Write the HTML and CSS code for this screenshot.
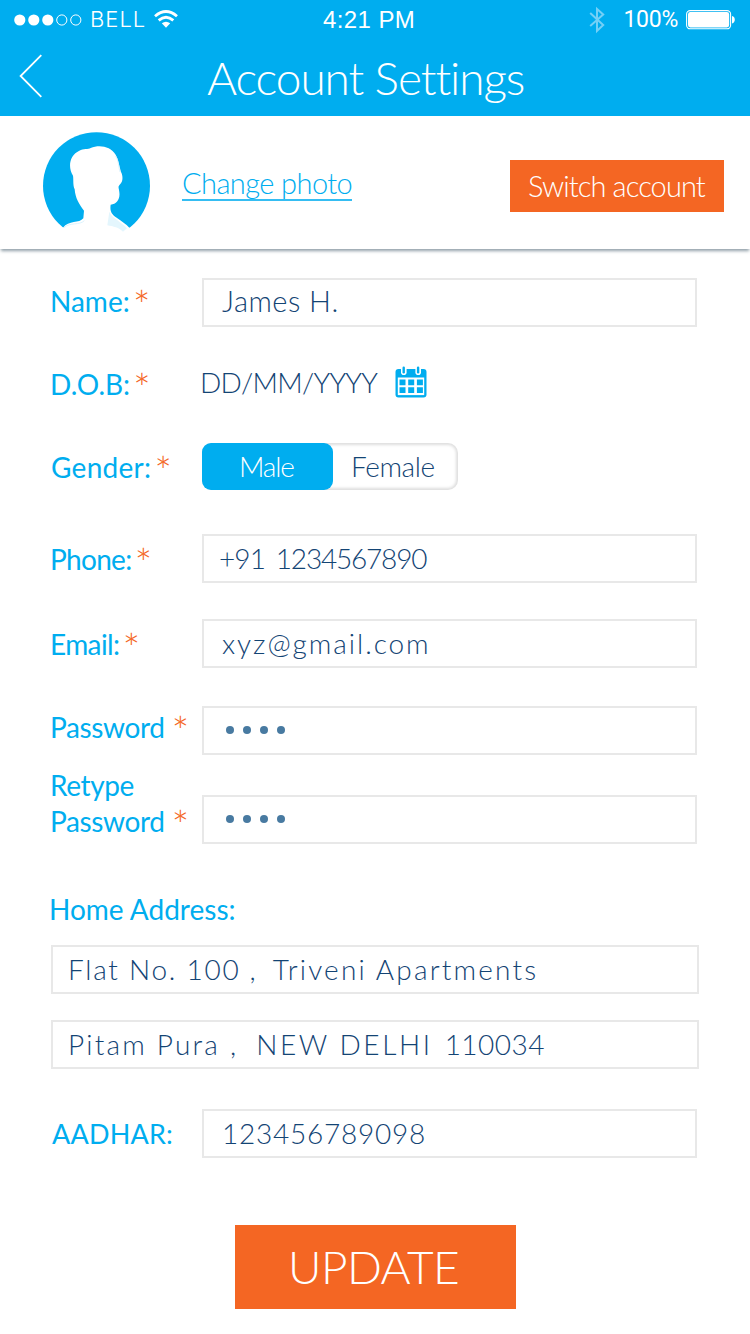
FILE: index.html
```html
<!DOCTYPE html>
<html lang="en">
<head>
<meta charset="utf-8">
<title>Account Settings</title>
<link rel="stylesheet" href="styles.css">
</head>
<body>
<header class="header">
  <div class="status">
    <div class="status-left">
      <svg class="signal" width="68" height="12" viewBox="0 0 68 12"><g fill="#fff"><circle cx="5.8" cy="6" r="5.6"/><circle cx="19.8" cy="6" r="5.6"/><circle cx="33.8" cy="6" r="5.6"/></g><g fill="none" stroke="#fff"><circle cx="47.8" cy="6" r="5.1"/><circle cx="61.8" cy="6" r="5.1"/></g></svg>
      <span class="carrier">BELL</span>
      <svg class="wifi" width="24" height="18" viewBox="0 0 24 18"><g fill="none" stroke="#fff" stroke-width="2.8"><path d="M1 6.2 Q12 -3.2 23 6.2"/><path d="M4.7 10.4 Q12 4 19.3 10.4"/></g><path d="M7.8 13.3 Q12 10 16.2 13.3 L12 17.8 Z" fill="#fff"/></svg>
    </div>
    <span class="clock">4:21 PM</span>
    <div class="status-right">
      <svg class="bluetooth" width="16" height="28" viewBox="0 0 16 28"><path d="M1.2 7 L14.2 19 L8 25 V3 L14.2 8.4 L1.2 20" fill="none" stroke="#74d0f6" stroke-width="2"/></svg>
      <span class="charge">100%</span>
      <svg class="battery" width="50" height="20" viewBox="0 0 50 20"><rect x=".6" y=".6" width="44" height="18.2" rx="3.6" fill="none" stroke="#fff" stroke-width="1.1"/><rect x="2" y="2" width="41.2" height="15.4" rx="2.4" fill="#fff"/><path d="M46 6 Q48.8 6.8 48.8 9.7 Q48.8 12.6 46 13.4 Z" fill="#fff"/></svg>
    </div>
  </div>
  <div class="titlebar">
    <svg class="back" width="24" height="44" viewBox="0 0 24 44"><path d="M22.3 1.2 L1.6 22 L22.3 42.8" fill="none" stroke="#fff" stroke-width="1.8"/></svg>
    <h1 class="title">Account Settings</h1>
  </div>
</header>

<section class="profile">
  <svg class="avatar" width="110" height="105" viewBox="66 44 330 315">
    <circle cx="229.500" cy="208" r="160.500" fill="#00adef"/>
    <path d="M129 334 C146 311 178 322 190 306 L192 283 C177 264 166 245 164 219 C158 205 161 190 159 178 C142 150 150 116 178 103 C190 96 205 100 212 95 C238 84 272 90 287 115 C296 130 298 150 303 167 C309 178 310 196 299 205 C292 212 298 218 298 228 C301 248 290 263 272 265 C269 285 275 294 290 304 C305 314 318 323 328 334 L400 334 V372 H60 V334 Z" fill="#fff"/>
    <path d="M268 286 C276 306 302 314 321 336 L309 346 C297 334 280 330 262 327 Z" fill="#e4f6fd"/>
    <path d="M132 334 C150 317 178 328 193 313 M287 119 C296 132 295 150 300 167" fill="none" stroke="#d5f0fc" stroke-width="2.500"/>
  </svg>
  <a class="change">Change photo</a>
  <button class="switch">Switch account</button>
</section>

<main class="form">
  <div class="row row-name">
    <div class="label">Name:<i class="req">*</i></div>
    <div class="field"><span class="v-name">James H.</span></div>
  </div>
  <div class="row row-dob">
    <div class="label">D.O.B:<i class="req">*</i></div>
    <span class="dob">DD/MM/YYYY</span>
    <svg class="calendar" width="32" height="32" viewBox="0 0 32 32"><rect x=".5" y="3" width="31" height="28.500" rx="3" fill="#00adef"/><rect x="2.800" y="11.500" width="26.400" height="17.600" fill="#fff"/><g fill="#fff"><rect x="6" y="0" width="5.600" height="9" rx="2.800"/><rect x="20.400" y="0" width="5.600" height="9" rx="2.800"/></g><g fill="#00adef"><rect x="7.500" y=".5" width="2.400" height="7" rx="1.200"/><rect x="21.900" y=".5" width="2.400" height="7" rx="1.200"/><path d="M4.500 13.500h6v5.800h-6zM13.200 13.500h6v5.800h-6zM21.900 13.500h6v5.800h-6zM4.500 21.200h6v5.800h-6zM13.200 21.200h6v5.800h-6zM21.900 21.200h6v5.800h-6z"/></g></svg>
  </div>
  <div class="row row-gender">
    <div class="label l-gender">Gender:<i class="req">*</i></div>
    <div class="toggle"><span class="male">Male</span><span class="female">Female</span></div>
  </div>
  <div class="row row-phone">
    <div class="label l-phone">Phone:<i class="req">*</i></div>
    <div class="field"><span class="v-phone">+91 <span class="number">1234567890</span></span></div>
  </div>
  <div class="row row-email">
    <div class="label l-email">Email:<i class="req">*</i></div>
    <div class="field"><span class="v-email">xyz@gmail.com</span></div>
  </div>
  <div class="row row-password">
    <div class="label l-password">Password<i class="req">*</i></div>
    <div class="field dots"><b></b><b></b><b></b><b></b></div>
  </div>
  <div class="row row-retype">
    <div class="label l-password">Retype<br>Password<i class="req">*</i></div>
    <div class="field dots"><b></b><b></b><b></b><b></b></div>
  </div>
  <h2 class="label heading">Home Address:</h2>
  <div class="field wide line1"><span class="flat">Flat No. 100</span><span class="comma1">,</span><span class="triveni">Triveni Apartments</span></div>
  <div class="field wide line2"><span class="pitam">Pitam Pura</span><span class="comma2">,</span><span class="delhi">NEW DELHI</span><span class="pin">110034</span></div>
  <div class="row row-aadhar">
    <div class="label l-aadhar">AADHAR:</div>
    <div class="field"><span class="v-aadhar">123456789098</span></div>
  </div>
  <button class="update">UPDATE</button>
</main>
</body>
</html>
```

FILE: styles.css
```css
* { box-sizing: border-box; }
body { margin: 0; width: 750px; height: 1334px; background: #fff; color: #134474; font: 300 28px/36px Lato, sans-serif; overflow: hidden; }
svg { display: block; flex: none; }
span, a { white-space: nowrap; }
button { border: 0; margin: 0; background: #f46623; color: #fff; font-family: Lato, sans-serif; font-weight: 300; white-space: nowrap; }

.header { height: 116px; background: #00adef; color: #fff; }
.status { display: grid; grid-template-columns: 323px 1fr auto; height: 39px; align-items: center; font: 400 23px/39px Roboto, sans-serif; }
.status-left, .status-right { display: flex; align-items: center; height: 39px; }
.status-left { padding-left: 14px; }
.carrier { margin-left: 8px; font: 300 22px/39px Inter, sans-serif; letter-spacing: 1px; }
.wifi { margin-left: 8px; margin-top: -2px; }
.clock { font: 400 24px/38px "Liberation Sans", sans-serif; letter-spacing: 0.4px; }
.status-right { padding-right: 14px; }
.bluetooth { margin-right: 18px; }
.charge { letter-spacing: -0.26px; }
.battery { margin-left: 8px; }
.titlebar { display: flex; height: 77px; padding-left: 19px; }
.back { margin-top: 15px; }
.title { margin: 9px 0 0 164px; font-size: 46px; line-height: 60px; font-weight: 300; letter-spacing: -1.08px; white-space: nowrap; }

.profile { display: flex; height: 133px; padding: 0 26px 0 42px; background: #fff; box-shadow: 0 3px 3px -1px rgba(70, 95, 110, 0.6); }
.avatar { margin-top: 15px; }
.change { margin: 48px 0 0 30px; height: 37px; border-bottom: 2px solid #35bdf2; color: #00adef; font-size: 29px; line-height: 37px; letter-spacing: -0.58px; }
.switch { width: 214px; height: 52px; margin: 44px 0 0 auto; padding: 1px 0 1px 18px; font-size: 29px; line-height: 50px; letter-spacing: -0.92px; text-align: left; }

.form { display: flex; flex-direction: column; padding-left: 50px; }
.row { display: flex; align-items: center; height: 49px; }
.label { flex: none; width: 152px; color: #00adef; font-weight: 400; white-space: nowrap; }
.req { display: inline-block; height: 20px; margin-left: 3px; color: #f46623; font-size: 42px; font-style: normal; font-weight: 300; line-height: 20px; letter-spacing: 0; vertical-align: -9px; }
.field { display: flex; align-items: center; width: 495px; height: 49px; padding-left: 18px; padding-bottom: 2px; border: 2px solid #e8e8e8; }
.row-name { margin-top: 29px; }
.row-name .label { padding-bottom: 4px; }
.row-name .field { padding-bottom: 4px; }
.row-dob { margin-top: 32px; }
.row-gender { margin-top: 35px; height: 47px; }
.row-phone { margin-top: 44px; }
.row-email { margin-top: 36px; }
.row-password { margin-top: 38px; }
.row-password .label { padding-bottom: 8px; }
.row-retype { height: 78px; margin-top: 11px; align-items: flex-end; }
.row-retype .label { padding-bottom: 5px; }
.row-aadhar { margin-top: 40px; }

.l-gender { padding-left: 1px; letter-spacing: 0.28px; }
.l-phone { letter-spacing: -0.7px; }
.l-email { letter-spacing: -0.61px; }
.l-password { letter-spacing: -0.38px; }
.l-password .req { margin-left: 7px; }
.l-aadhar { padding-left: 2px; font-size: 27px; letter-spacing: 0.18px; }
.v-name { font-size: 29px; letter-spacing: 0.5px; }
.v-phone { margin-left: -3px; letter-spacing: -0.88px; }
.number { margin-left: 4px; letter-spacing: -1.2px; }
.v-email { letter-spacing: 1.95px; }
.v-aadhar { letter-spacing: 0.76px; }

.dob { margin: -4px 0 0 -2px; letter-spacing: -0.7px; }
.calendar { margin: -4px 0 0 18px; }
.toggle { display: flex; width: 256px; height: 47px; border-radius: 10px; box-shadow: inset 0 0 3px 2px #dedede; line-height: 47px; }
.male { width: 131px; padding-left: 37px; border-radius: 9px; background: #00adef; color: #fff; letter-spacing: -1.1px; }
.female { padding-left: 18px; letter-spacing: -0.4px; }

.dots { gap: 9.300px; padding: 0 0 2px 21.500px; }
.dots b { width: 8px; height: 8px; border-radius: 50%; background: #487aa1; }

.heading { width: auto; margin: 47px 0 0 -1px; font-size: 28px; line-height: 36px; }
.wide { width: 648px; margin-left: 1px; padding-left: 15px; }
.line1 { margin-top: 18px; }
.line2 { margin-top: 26px; }
.flat { letter-spacing: 1.75px; }
.comma1 { margin-left: 9px; }
.triveni { margin-left: 17px; letter-spacing: 2.2px; }
.pitam { letter-spacing: 2.2px; }
.comma2 { margin-left: 10px; }
.delhi { margin-left: 20px; letter-spacing: 2.6px; }
.pin { margin-left: 12px; letter-spacing: 0.5px; }

.update { width: 281px; height: 84px; margin: 67px 0 0 185px; padding: 0 0 0 53px; font-size: 46px; line-height: 84px; letter-spacing: -0.56px; text-align: left; }
```
